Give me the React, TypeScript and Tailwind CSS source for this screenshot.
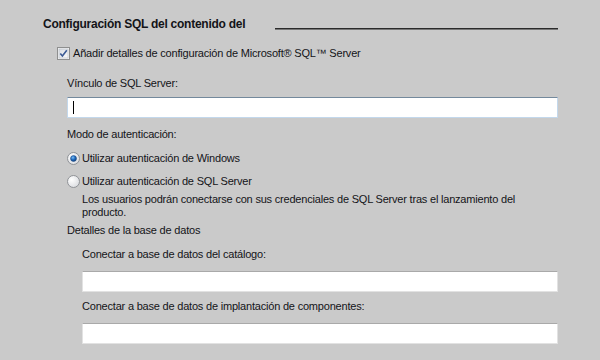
import React from "react";

const Label = ({ children, className = "" }: { children: React.ReactNode; className?: string }) => (
  <div className={`h-[14px] leading-[14px] whitespace-nowrap ${className}`}>{children}</div>
);

const Checkbox = () => (
  <svg width="13" height="13" viewBox="0 0 13 13" className="shrink-0">
    <defs>
      <linearGradient id="cbg" x1="0" y1="0" x2="1" y2="1">
        <stop offset="0" stopColor="#d9dde3" />
        <stop offset="1" stopColor="#fbfbfb" />
      </linearGradient>
    </defs>
    <rect x="0.5" y="0.5" width="12" height="12" fill="#f4f4f4" stroke="#8e8f8f" />
    <rect x="2" y="2" width="9" height="9" fill="url(#cbg)" stroke="#b5bcc6" strokeWidth="0.6" />
    <path d="M3.3 6.4 L5.4 9 L9.8 3.2" fill="none" stroke="#3c5b95" strokeWidth="1.6" />
  </svg>
);

const Radio = ({ checked }: { checked?: boolean }) => (
  <svg width="13" height="13" viewBox="0 0 13 13" className="shrink-0">
    <defs>
      <radialGradient id="rbg" cx="0.35" cy="0.35" r="0.8">
        <stop offset="0" stopColor="#ffffff" />
        <stop offset="1" stopColor="#d6d8dc" />
      </radialGradient>
      <radialGradient id="rdot" cx="0.4" cy="0.35" r="0.7">
        <stop offset="0" stopColor="#7fc1f5" />
        <stop offset="0.5" stopColor="#1f6bc0" />
        <stop offset="1" stopColor="#0c3a73" />
      </radialGradient>
    </defs>
    <circle cx="6.5" cy="6.5" r="6" fill="url(#rbg)" stroke="#8f9296" />
    {checked && <circle cx="6.5" cy="6.5" r="3" fill="url(#rdot)" stroke="#214b82" strokeWidth="0.5" />}
  </svg>
);

export default function App() {
  return (
    <div
      className="w-[600px] h-[360px] overflow-hidden bg-[#cacaca] text-[#141418] text-[11px] tracking-[-0.2px]"
      style={{ fontFamily: "Tahoma, 'Liberation Sans', sans-serif" }}
    >
      <div className="flex items-end h-[16px] mt-[16px] pl-[43px] pr-[42px]">
        <div className="font-bold text-[12px] leading-[16px] tracking-[-0.25px] whitespace-nowrap">
          Configuración SQL del contenido del
        </div>
        <div className="flex-1 ml-[30px] mb-[2px] h-[2px] border-t border-[#2b2b2b] border-b border-b-[#777]" />
      </div>

      <div className="flex items-center gap-[3px] h-[14px] mt-[14px] pl-[57px]">
        <Checkbox />
        <Label>Añadir detalles de configuración de Microsoft® SQL™ Server</Label>
      </div>

      <Label className="mt-[16px] pl-[67px]">Vínculo de SQL Server:</Label>
      <div className="mt-[7px] ml-[67px] w-[491px] h-[21px] bg-white border border-[#c3d8ec] border-t-[#74899c] flex items-center pl-[5px]">
        <div className="w-[1px] h-[13px] bg-black" />
      </div>

      <Label className="mt-[9px] pl-[67px]">Modo de autenticación:</Label>

      <div className="flex items-center gap-[2px] h-[14px] mt-[10px] pl-[67px]">
        <Radio checked />
        <Label>Utilizar autenticación de Windows</Label>
      </div>
      <div className="flex items-center gap-[2px] h-[14px] mt-[9px] pl-[67px]">
        <Radio />
        <Label>Utilizar autenticación de SQL Server</Label>
      </div>
      <div className="mt-[5px] pl-[82px] pr-[40px] leading-[13px]">
        Los usuarios podrán conectarse con sus credenciales de SQL Server tras el lanzamiento del producto.
      </div>

      <Label className="mt-[4px] pl-[67px]">Detalles de la base de datos</Label>

      <Label className="mt-[10px] pl-[82px]">Conectar a base de datos del catálogo:</Label>
      <div className="mt-[10px] ml-[82px] w-[476px] h-[21px] bg-white border border-[#e2e2e2] border-t-[#a9a9a9]" />

      <Label className="mt-[7px] pl-[82px]">Conectar a base de datos de implantación de componentes:</Label>
      <div className="mt-[10px] ml-[82px] w-[476px] h-[21px] bg-white border border-[#e2e2e2] border-t-[#a9a9a9]" />
    </div>
  );
}
